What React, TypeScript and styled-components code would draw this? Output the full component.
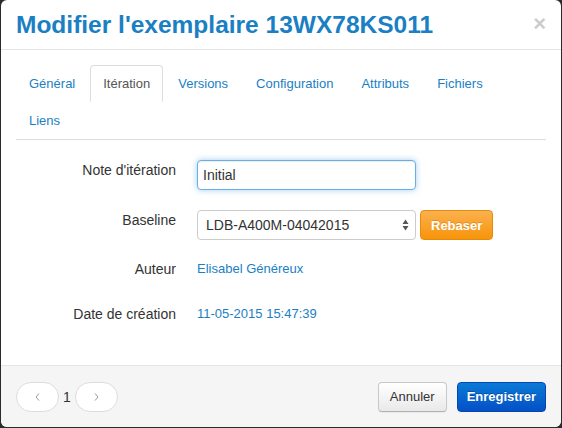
import React from "react";
import styled, { createGlobalStyle } from "styled-components";

const Global = createGlobalStyle`
  html, body {
    margin: 0;
    padding: 0;
    background: #2b2b2b;
    font-family: "Liberation Sans", Arial, Helvetica, sans-serif;
  }
  * { box-sizing: border-box; }
`;

const LINK = "#1a7fc3";

const Modal = styled.div`
  width: 560px;
  height: 427px;
  margin-left: 1px;
  background: #fff;
  border-radius: 6px;
  overflow: hidden;
  display: flex;
  flex-direction: column;
`;

const Header = styled.div`
  height: 50px;
  flex: none;
  border-bottom: 1px solid #e5e5e5;
  display: flex;
  align-items: center;
  justify-content: space-between;
  padding: 0 15px;
`;

const Title = styled.h2`
  margin: 0;
  font-size: 24.5px;
  font-weight: bold;
  color: ${LINK};
  line-height: 28px;
`;

const Close = styled.span`
  font-size: 22px;
  font-weight: bold;
  color: #000;
  opacity: 0.2;
  line-height: 22px;
  margin-top: -2px;
`;

const Body = styled.div`
  flex: 1;
  padding: 15px 15px 0;
`;

const Tabs = styled.ul`
  list-style: none;
  margin: 0;
  padding: 0;
  display: flex;
  flex-wrap: wrap;
  border-bottom: 1px solid #ddd;
`;

const Tab = styled.li<{ $active?: boolean }>`
  margin-right: 2px;
  padding: 9px 12px;
  line-height: 17px;
  font-size: 13px;
  border: 1px solid ${(p) => (p.$active ? "#ddd" : "transparent")};
  border-bottom-color: transparent;
  border-radius: 4px 4px 0 0;
  color: ${(p) => (p.$active ? "#555" : LINK)};
  background: #fff;
`;

const Form = styled.div`
  display: flex;
  flex-direction: column;
`;

const Row = styled.div<{ $mt: number }>`
  display: grid;
  grid-template-columns: 160px 1fr;
  column-gap: 21px;
  align-items: start;
  margin-top: ${(p) => p.$mt}px;
`;

const Label = styled.div`
  text-align: right;
  font-size: 14px;
  line-height: 20px;
  color: #333;
`;

const Controls = styled.div`
  display: flex;
  align-items: center;
`;

const TextInput = styled.input`
  width: 219px;
  height: 30px;
  border: 1px solid #66afe9;
  border-radius: 4px;
  padding: 0 5px;
  font-family: "Liberation Sans", Arial, sans-serif;
  font-size: 14px;
  color: #333;
  outline: none;
  box-shadow: inset 0 1px 1px rgba(0, 0, 0, 0.075), 0 0 6px rgba(102, 175, 233, 0.6);
`;

const SelectBox = styled.div`
  width: 219px;
  height: 30px;
  border: 1px solid #ccc;
  border-radius: 4px;
  padding: 0 6px 0 8px;
  display: flex;
  align-items: center;
  justify-content: space-between;
  font-size: 14px;
  color: #333;
  background: #fff;
`;

const Btn = styled.button<{ $variant: "warning" | "default" | "primary"; $px: number; $ml?: number }>`
  height: 30px;
  padding: 0 ${(p) => p.$px}px;
  margin-left: ${(p) => p.$ml ?? 0}px;
  border-radius: 4px;
  font-family: "Liberation Sans", Arial, sans-serif;
  font-size: 13px;
  font-weight: ${(p) => (p.$variant === "default" ? "normal" : "bold")};
  cursor: pointer;
  ${(p) =>
    p.$variant === "warning"
      ? `
    color: #fff;
    background: linear-gradient(#fbb14e, #f7940a);
    border: 1px solid #e58a0d;
    text-shadow: 0 -1px 0 rgba(0,0,0,0.15);
  `
      : p.$variant === "primary"
      ? `
    color: #fff;
    background: linear-gradient(#0a7ad6, #0450c6);
    border: 1px solid #0447b3;
    text-shadow: 0 -1px 0 rgba(0,0,0,0.25);
  `
      : `
    color: #333;
    background: linear-gradient(#ffffff, #e9e9e9);
    border: 1px solid #c8c8c8;
    border-bottom-color: #b3b3b3;
    box-shadow: 0 1px 1px rgba(0,0,0,0.05);
  `}
`;

const Value = styled.span`
  font-size: 13px;
  line-height: 20px;
  color: ${LINK};
`;

const Footer = styled.div`
  height: 62px;
  flex: none;
  border-top: 1px solid #e5e5e5;
  background: #f5f5f5;
  padding: 0 15px;
  display: flex;
  align-items: center;
  justify-content: space-between;
`;

const Pager = styled.div`
  display: flex;
  align-items: center;
  gap: 4px;
  font-size: 14px;
  color: #333;
`;

const PageBtn = styled.div`
  width: 43px;
  height: 30px;
  border: 1px solid #ddd;
  border-radius: 15px;
  background: #fff;
  display: flex;
  align-items: center;
  justify-content: center;
`;

const Actions = styled.div`
  display: flex;
  gap: 10px;
`;

const Chevron = ({ dir }: { dir: "left" | "right" }) => (
  <svg width="5" height="8" viewBox="0 0 5 8">
    <polyline
      points={dir === "left" ? "4,0.5 1,4 4,7.5" : "1,0.5 4,4 1,7.5"}
      fill="none"
      stroke="#999"
      strokeWidth="1"
    />
  </svg>
);

const UpDown = () => (
  <svg width="7" height="12" viewBox="0 0 7 12">
    <polygon points="3.5,0.5 6.5,5 0.5,5" fill="#555" />
    <polygon points="0.5,7 6.5,7 3.5,11.5" fill="#555" />
  </svg>
);

const tabs = ["Général", "Itération", "Versions", "Configuration", "Attributs", "Fichiers", "Liens"];

export default function App() {
  return (
    <>
      <Global />
      <Modal>
        <Header>
          <Title>Modifier l'exemplaire 13WX78KS011</Title>
          <Close>×</Close>
        </Header>
        <Body>
          <Tabs>
            {tabs.map((t) => (
              <Tab key={t} $active={t === "Itération"}>
                {t}
              </Tab>
            ))}
          </Tabs>
          <Form>
            <Row $mt={20}>
              <Label>Note d'itération</Label>
              <Controls>
                <TextInput defaultValue="Initial" />
              </Controls>
            </Row>
            <Row $mt={20}>
              <Label>Baseline</Label>
              <Controls>
                <SelectBox>
                  <span>LDB-A400M-04042015</span>
                  <UpDown />
                </SelectBox>
                <Btn $variant="warning" $px={10} $ml={4}>
                  Rebaser
                </Btn>
              </Controls>
            </Row>
            <Row $mt={19}>
              <Label>Auteur</Label>
              <Value>Elisabel Généreux</Value>
            </Row>
            <Row $mt={25}>
              <Label>Date de création</Label>
              <Value>11-05-2015 15:47:39</Value>
            </Row>
          </Form>
        </Body>
        <Footer>
          <Pager>
            <PageBtn>
              <Chevron dir="left" />
            </PageBtn>
            <span>1</span>
            <PageBtn>
              <Chevron dir="right" />
            </PageBtn>
          </Pager>
          <Actions>
            <Btn $variant="default" $px={11}>
              Annuler
            </Btn>
            <Btn $variant="primary" $px={9}>
              Enregistrer
            </Btn>
          </Actions>
        </Footer>
      </Modal>
    </>
  );
}
